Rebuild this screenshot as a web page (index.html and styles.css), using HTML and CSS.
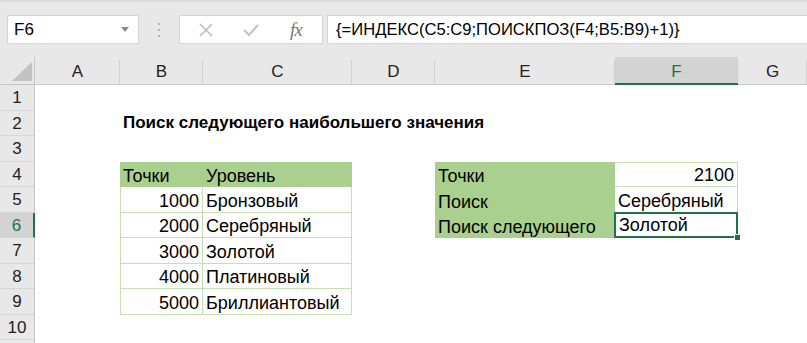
FILE: index.html
```html
<!DOCTYPE html>
<html lang="ru">
<head>
    <meta charset="UTF-8">
    <title>Поиск следующего наибольшего значения</title>
    <link rel="stylesheet" href="styles.css">
</head>
<body>

    <div class="toolbar">
        <div class="namebox">
            <span>F6</span>
            <svg class="drop" width="8" height="5" viewBox="0 0 8 5"><path d="M0 0h8L4 5z" fill="#8a8a8a"/></svg>
        </div>
        <svg class="grip" width="4" height="16" viewBox="0 0 4 16">
            <rect x="1" y="1" width="2" height="2" fill="#b4b4b4"/>
            <rect x="1" y="7" width="2" height="2" fill="#b4b4b4"/>
            <rect x="1" y="13" width="2" height="2" fill="#b4b4b4"/>
        </svg>
        <div class="buttons">
            <svg class="cancel" width="16" height="16" viewBox="0 0 16 16"><path d="M2 2l12 12M14 2L2 14" stroke="#bdbdbd" stroke-width="1.6" fill="none"/></svg>
            <svg class="enter" width="16" height="14" viewBox="0 0 16 14"><path d="M1 7l5 5L15 2" stroke="#c4c4c4" stroke-width="2.2" fill="none"/></svg>
            <span class="fx">fx</span>
        </div>
        <div class="formula">{=ИНДЕКС(C5:C9;ПОИСКПОЗ(F4;B5:B9)+1)}</div>
    </div>

    <div class="sheet">
        <!-- заголовки столбцов -->
        <div class="corner"><svg width="20" height="19" viewBox="0 0 20 19"><path d="M20 0V19H0z" fill="#c2c2c2"/></svg></div>
        <div class="ch">A</div>
        <div class="ch">B</div>
        <div class="ch">C</div>
        <div class="ch">D</div>
        <div class="ch">E</div>
        <div class="ch active">F</div>
        <div class="ch">G</div>

        <!-- 1 -->
        <div class="rh">1</div>
        <div class="c"></div><div class="c"></div><div class="c"></div><div class="c"></div><div class="c"></div><div class="c"></div><div class="c"></div>

        <!-- 2 -->
        <div class="rh">2</div>
        <div class="c"></div>
        <div class="c title">Поиск следующего наибольшего значения</div>
        <div class="c"></div><div class="c"></div><div class="c"></div><div class="c"></div><div class="c"></div>

        <!-- 3 -->
        <div class="rh">3</div>
        <div class="c"></div><div class="c"></div><div class="c"></div><div class="c"></div><div class="c"></div><div class="c"></div><div class="c"></div>

        <!-- 4 -->
        <div class="rh">4</div>
        <div class="c"></div>
        <div class="c head">Точки</div>
        <div class="c head">Уровень</div>
        <div class="c"></div>
        <div class="c head">Точки</div>
        <div class="c val num top">2100</div>
        <div class="c"></div>

        <!-- 5 -->
        <div class="rh">5</div>
        <div class="c"></div>
        <div class="c cell num left">1000</div>
        <div class="c cell">Бронзовый</div>
        <div class="c"></div>
        <div class="c head">Поиск</div>
        <div class="c val">Серебряный</div>
        <div class="c"></div>

        <!-- 6 -->
        <div class="rh active">6</div>
        <div class="c"></div>
        <div class="c cell num left">2000</div>
        <div class="c cell">Серебряный</div>
        <div class="c"></div>
        <div class="c head">Поиск следующего</div>
        <div class="c val selected">Золотой</div>
        <div class="c"></div>

        <!-- 7 -->
        <div class="rh">7</div>
        <div class="c"></div>
        <div class="c cell num left">3000</div>
        <div class="c cell">Золотой</div>
        <div class="c"></div><div class="c"></div><div class="c"></div><div class="c"></div>

        <!-- 8 -->
        <div class="rh">8</div>
        <div class="c"></div>
        <div class="c cell num left">4000</div>
        <div class="c cell">Платиновый</div>
        <div class="c"></div><div class="c"></div><div class="c"></div><div class="c"></div>

        <!-- 9 -->
        <div class="rh">9</div>
        <div class="c"></div>
        <div class="c cell num left">5000</div>
        <div class="c cell">Бриллиантовый</div>
        <div class="c"></div><div class="c"></div><div class="c"></div><div class="c"></div>

        <!-- 10 -->
        <div class="rh">10</div>
        <div class="c"></div><div class="c"></div><div class="c"></div><div class="c"></div><div class="c"></div><div class="c"></div><div class="c"></div>

        <!-- 11, видна только кромка -->
        <div class="rh"></div>
        <div class="c"></div><div class="c"></div><div class="c"></div><div class="c"></div><div class="c"></div><div class="c"></div><div class="c"></div>
    </div>

</body>
</html>
```

FILE: styles.css
```css
body {
    margin: 0;
    width: 807px;
    height: 343px;
    overflow: hidden;
    font-family: "Liberation Sans", Arial, sans-serif;
    font-size: 17px;
    color: #000;
    background: #fff;
}
.toolbar {
    height: 57px;
    box-sizing: border-box;
    padding: 15px 0 0 7px;
    background: #e8e8e8;
    border-top: 2px solid #dcdcdc;
    display: flex;
    align-items: flex-start;
    white-space: nowrap;
}
.namebox, .buttons, .formula {
    height: 29px;
    box-sizing: border-box;
    background: #fff;
    border: 1px solid #d4d4d4;
    display: flex;
    align-items: center;
    margin-top: -2px;
}
.namebox {
    width: 132px;
    padding: 0 9px 0 6px;
    justify-content: space-between;
}
.grip {
    margin: 5px 18px 0 18px;
}
.buttons {
    width: 144px;
    padding-left: 18px;
}
.enter {
    margin-left: 29px;
}
.fx {
    margin-left: 31px;
    font-family: "Liberation Serif", "Times New Roman", serif;
    font-style: italic;
    font-size: 19px;
    color: #777;
    letter-spacing: -1px;
}
.formula {
    flex: 1;
    margin-left: 4px;
    padding-left: 8px;
    border-right: none;
    font-size: 16.6px;
}
.sheet {
    display: grid;
    grid-template-columns: 35px 85px 83px 149px 83px 180px 123px 1fr;
    grid-template-rows: 28px repeat(11, 25.5px);
    background: #fff;
}
.corner, .ch {
    background: #e8e8e8;
    border-bottom: 1px solid #c6c6c6;
}
.corner {
    border-right: 1px solid #c6c6c6;
    display: flex;
    justify-content: flex-end;
    align-items: flex-end;
    padding: 0 2px 3px 0;
}
.ch {
    display: flex;
    align-items: center;
    justify-content: center;
    padding-top: 3px;
    color: #222;
    position: relative;
}
.ch::after {
    content: "";
    position: absolute;
    right: 0;
    top: 3px;
    bottom: 0;
    width: 1px;
    background: #d0d0d0;
}
.ch.active {
    background: #d3d3d3;
    color: #217346;
    border-bottom: 2px solid #217346;
}
.rh {
    background: #e8e8e8;
    border-right: 1px solid #c6c6c6;
    border-bottom: 1px solid #d6d6d6;
    display: flex;
    align-items: center;
    justify-content: center;
    padding-top: 2px;
    color: #222;
}
.rh.active {
    background: #d3d3d3;
    color: #217346;
    border-right: 2px solid #217346;
}
.c {
    display: flex;
    align-items: flex-end;
    padding: 0 3px;
    white-space: nowrap;
    min-width: 0;
    font-size: 18px;
}
.title {
    font-size: 17px;
    font-weight: bold;
    padding-bottom: 3px;
}
.head {
    background: #a9d08e;
}
.cell, .val {
    border-right: 1px solid #c6e0b4;
    border-bottom: 1px solid #c6e0b4;
}
.left {
    border-left: 1px solid #c6e0b4;
}
.top {
    border-top: 1px solid #c6e0b4;
}
.num {
    justify-content: flex-end;
}
.selected {
    position: relative;
    border: 2px solid #217346;
    margin: -1px 0 0 -1px;
}
.selected::after {
    content: "";
    position: absolute;
    right: -5px;
    bottom: -5px;
    width: 5px;
    height: 5px;
    background: #217346;
    border: 1px solid #fff;
}
```
